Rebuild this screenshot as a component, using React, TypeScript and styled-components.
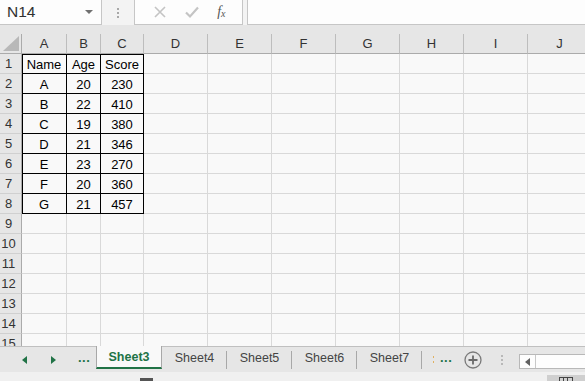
import React from "react";
import styled, { createGlobalStyle } from "styled-components";

const GlobalStyle = createGlobalStyle`
  html, body {
    margin: 0;
    padding: 0;
    overflow: hidden;
  }
  body {
    font-family: "Liberation Sans", Arial, sans-serif;
    background: #f9f9f9;
  }
`;

const green = "#217346";
const gridLine = "#d9d9d9";

const columns = [
  { key: "A", width: 45 },
  { key: "B", width: 34 },
  { key: "C", width: 43 },
  { key: "D", width: 64 },
  { key: "E", width: 64 },
  { key: "F", width: 64 },
  { key: "G", width: 64 },
  { key: "H", width: 64 },
  { key: "I", width: 64 },
  { key: "J", width: 64 },
];

const data: string[][] = [
  ["Name", "Age", "Score"],
  ["A", "20", "230"],
  ["B", "22", "410"],
  ["C", "19", "380"],
  ["D", "21", "346"],
  ["E", "23", "270"],
  ["F", "20", "360"],
  ["G", "21", "457"],
];

const tabs = ["Sheet3", "Sheet4", "Sheet5", "Sheet6", "Sheet7"];

const App = () => {
  return (
    <Page>
      <GlobalStyle />
      <FormulaBar>
        <NameBox>
          <span>N14</span>
          <DropArrow />
        </NameBox>
        <Grip>
          <i />
          <i />
          <i />
        </Grip>
        <FxButtons>
          <svg width="14" height="14" viewBox="0 0 14 14">
            <path d="M2 2 L12 12 M12 2 L2 12" stroke="#c4c4c4" strokeWidth="1.6" />
          </svg>
          <svg width="16" height="14" viewBox="0 0 16 14">
            <path d="M2 7.5 L6 11.5 L14 2.5" stroke="#c4c4c4" strokeWidth="2.2" fill="none" />
          </svg>
          <Fx>
            f<sub>x</sub>
          </Fx>
        </FxButtons>
        <FormulaInput />
      </FormulaBar>
      <HeaderGap />
      <Sheet>
        <Row>
          <Corner>
            <svg width="16" height="15" viewBox="0 0 16 15">
              <path d="M16 0 L16 15 L0 15 Z" fill="#b8b8b8" />
            </svg>
          </Corner>
          {columns.map((c) => (
            <ColHeader key={c.key} $w={c.width}>
              {c.key}
            </ColHeader>
          ))}
        </Row>
        {Array.from({ length: 15 }, (_, r) => (
          <Row key={r}>
            <RowHeader>{r + 1}</RowHeader>
            {columns.map((c, ci) => {
              const value = data[r] && ci < 3 ? data[r][ci] : "";
              const inTable = r < 8 && ci < 3;
              return (
                <Cell
                  key={c.key}
                  $w={c.width}
                  $table={inTable}
                  $left={inTable && ci === 0}
                  $top={inTable && r === 0}
                >
                  {value}
                </Cell>
              );
            })}
          </Row>
        ))}
      </Sheet>
      <TabBar>
        <TabNav>
          <svg width="6" height="8" viewBox="0 0 6 8">
            <path d="M5 0 L5 8 L0 4 Z" fill={green} />
          </svg>
          <svg width="6" height="8" viewBox="0 0 6 8">
            <path d="M1 0 L1 8 L6 4 Z" fill={green} />
          </svg>
          <GreenDots>...</GreenDots>
        </TabNav>
        {tabs.map((t, i) => (
          <Tab key={t} $active={i === 0}>
            {t}
          </Tab>
        ))}
        <TabTools>
          <OrangeDots>
            <i />
            <i />
          </OrangeDots>
          <GreenDots>...</GreenDots>
          <svg width="18" height="18" viewBox="0 0 18 18">
            <circle cx="9" cy="9" r="8" fill="none" stroke="#7a7a7a" strokeWidth="1.3" />
            <path d="M9 4.5 V13.5 M4.5 9 H13.5" stroke="#6a6a6a" strokeWidth="1.8" />
          </svg>
          <Grip $light>
            <i />
            <i />
            <i />
          </Grip>
        </TabTools>
        <HScroll>
          <ScrollBtn>
            <svg width="5" height="8" viewBox="0 0 5 8">
              <path d="M5 0 L5 8 L0 4 Z" fill="#606060" />
            </svg>
          </ScrollBtn>
        </HScroll>
      </TabBar>
      <StatusBar>
        <StatusIcon />
        <ViewBox>
          <GridIcon />
        </ViewBox>
      </StatusBar>
    </Page>
  );
};

export default App;

const Page = styled.div`
  width: 585px;
  height: 381px;
  display: flex;
  flex-direction: column;
  overflow: hidden;
  background: #f9f9f9;
`;

const FormulaBar = styled.div`
  height: 25px;
  flex-shrink: 0;
  display: flex;
  background: #f3f3f3;
  box-sizing: border-box;
`;

const NameBox = styled.div`
  width: 102px;
  height: 25px;
  box-sizing: border-box;
  background: #fdfdfd;
  border: 1px solid #c6c6c6;
  border-top: none;
  border-left: none;
  display: flex;
  align-items: center;
  justify-content: space-between;
  padding: 0 8px 0 7px;
  font-size: 15.5px;
  color: #303030;
`;

const DropArrow = styled.div`
  width: 0;
  height: 0;
  border-left: 4px solid transparent;
  border-right: 4px solid transparent;
  border-top: 4px solid #707070;
`;

const Grip = styled.div<{ $light?: boolean }>`
  width: 32px;
  display: flex;
  flex-direction: column;
  align-items: center;
  justify-content: center;
  gap: 2px;
  i {
    width: 2px;
    height: 2px;
    background: ${(p) => (p.$light ? "#b8b8b8" : "#a8a8a8")};
  }
`;

const FxButtons = styled.div`
  width: 109px;
  height: 25px;
  box-sizing: border-box;
  background: #fdfdfd;
  border: 1px solid #c6c6c6;
  border-top: none;
  display: flex;
  align-items: center;
  justify-content: space-around;
  padding: 0 8px 0 10px;
`;

const Fx = styled.span`
  font-family: "Liberation Serif", "Times New Roman", serif;
  font-style: italic;
  font-size: 14px;
  color: #555;
  sub {
    font-size: 10px;
    vertical-align: -1px;
  }
`;

const FormulaInput = styled.div`
  flex: 1;
  margin-left: 4px;
  height: 25px;
  box-sizing: border-box;
  background: #fdfdfd;
  border-left: 1px solid #c6c6c6;
  border-bottom: 1px solid #c6c6c6;
`;

const HeaderGap = styled.div`
  height: 9px;
  flex-shrink: 0;
  background: #e6e6e6;
`;

const Sheet = styled.div`
  height: 312px;
  flex-shrink: 0;
  overflow: hidden;
  display: flex;
  flex-direction: column;
`;

const Row = styled.div`
  display: flex;
  height: 20px;
  flex-shrink: 0;
`;

const Corner = styled.div`
  width: 22px;
  flex-shrink: 0;
  box-sizing: border-box;
  background: #e6e6e6;
  border-right: 1px solid #ababab;
  border-bottom: 1px solid #ababab;
  display: flex;
  align-items: flex-end;
  justify-content: flex-end;
  padding: 0 2px 2px 0;
`;

const ColHeader = styled.div<{ $w: number }>`
  width: ${(p) => p.$w}px;
  flex-shrink: 0;
  box-sizing: border-box;
  background: #e6e6e6;
  border-right: 1px solid #bdbdbd;
  border-bottom: 1px solid #ababab;
  display: flex;
  align-items: center;
  justify-content: center;
  font-size: 13px;
  color: #333;
`;

const RowHeader = styled.div`
  width: 22px;
  flex-shrink: 0;
  box-sizing: border-box;
  background: #e6e6e6;
  border-right: 1px solid #ababab;
  border-bottom: 1px solid #d0d0d0;
  display: flex;
  align-items: center;
  justify-content: center;
  padding-right: 4px;
  font-size: 13px;
  color: #333;
`;

const Cell = styled.div<{ $w: number; $table: boolean; $left: boolean; $top: boolean }>`
  width: ${(p) => p.$w}px;
  flex-shrink: 0;
  box-sizing: border-box;
  background: #f9f9f9;
  border-right: 1px solid ${(p) => (p.$table ? "#000" : gridLine)};
  border-bottom: 1px solid ${(p) => (p.$table ? "#000" : gridLine)};
  box-shadow: ${(p) =>
    [p.$left ? "inset 1px 0 0 #000" : "", p.$top ? "inset 0 1px 0 #000" : ""]
      .filter(Boolean)
      .join(", ") || "none"};
  display: flex;
  align-items: center;
  justify-content: center;
  font-size: 13px;
  color: #000;
  padding-top: 1px;
`;

const TabBar = styled.div`
  height: 26px;
  flex-shrink: 0;
  display: flex;
  align-items: stretch;
  background: #e6e6e6;
  border-top: 1px solid #c0c0c0;
  box-sizing: border-box;
`;

const TabNav = styled.div`
  width: 96px;
  flex-shrink: 0;
  display: flex;
  align-items: center;
  padding-left: 22px;
  gap: 22px;
  box-sizing: border-box;
`;

const GreenDots = styled.span`
  color: ${green};
  font-weight: bold;
  font-size: 13px;
  letter-spacing: 0.5px;
  margin-top: -4px;
`;

const Tab = styled.div<{ $active: boolean }>`
  width: ${(p) => (p.$active ? 66 : 65)}px;
  flex-shrink: 0;
  box-sizing: border-box;
  display: flex;
  align-items: center;
  justify-content: center;
  font-size: 12.5px;
  position: relative;
  color: ${(p) => (p.$active ? green : "#444")};
  font-weight: ${(p) => (p.$active ? "bold" : "normal")};
  background: ${(p) => (p.$active ? "#f9f9f9" : "transparent")};
  margin-top: ${(p) => (p.$active ? "-1px" : "0")};
  border-left: ${(p) => (p.$active ? "1px solid #a8a8a8" : "none")};
  border-right: ${(p) => (p.$active ? "1px solid #a8a8a8" : "none")};
  border-bottom: ${(p) => (p.$active ? `2px solid ${green}` : "none")};
  margin-bottom: 3px;
  padding-top: ${(p) => (p.$active ? "1px" : "0")};

  &::after {
    content: "";
    display: ${(p) => (p.$active ? "none" : "block")};
    position: absolute;
    right: 0;
    top: 4px;
    bottom: 0;
    width: 1px;
    background: #a8a8a8;
  }
`;

const TabTools = styled.div`
  width: 98px;
  flex-shrink: 0;
  display: flex;
  align-items: center;
  padding-left: 12px;
  gap: 10px;
  box-sizing: border-box;
  margin-left: -1px;
  & > ${GreenDots} {
    margin-left: -4px;
    margin-right: 2px;
  }
  & > ${Grip} {
    width: 20px;
  }
`;

const OrangeDots = styled.div`
  display: flex;
  flex-direction: column;
  gap: 3px;
  i {
    width: 1px;
    height: 2px;
    background: #e0b060;
  }
`;

const HScroll = styled.div`
  flex: 1;
  margin: 7px 0 3px 0;
  background: #fdfdfd;
  border: 1px solid #b8b8b8;
  border-right: none;
  display: flex;
`;

const ScrollBtn = styled.div`
  width: 15px;
  border-right: 1px solid #c8c8c8;
  display: flex;
  align-items: center;
  justify-content: center;
`;

const StatusBar = styled.div`
  height: 9px;
  flex-shrink: 0;
  display: flex;
  background: #f0f0f0;
  overflow: hidden;
`;

const StatusIcon = styled.div`
  width: 13px;
  height: 3px;
  margin: 6px 0 0 140px;
  background: #555;
`;

const ViewBox = styled.div`
  margin-left: auto;
  margin-top: 3px;
  width: 38px;
  background: #cfcfcf;
  display: flex;
  justify-content: center;
`;

const GridIcon = styled.div`
  width: 12px;
  height: 4px;
  margin-top: 2px;
  border: 1px solid #444;
  border-bottom: none;
  background: linear-gradient(to right, transparent 3px, #444 3px, #444 4px, transparent 4px, transparent 7px, #444 7px, #444 8px, transparent 8px);
`;
